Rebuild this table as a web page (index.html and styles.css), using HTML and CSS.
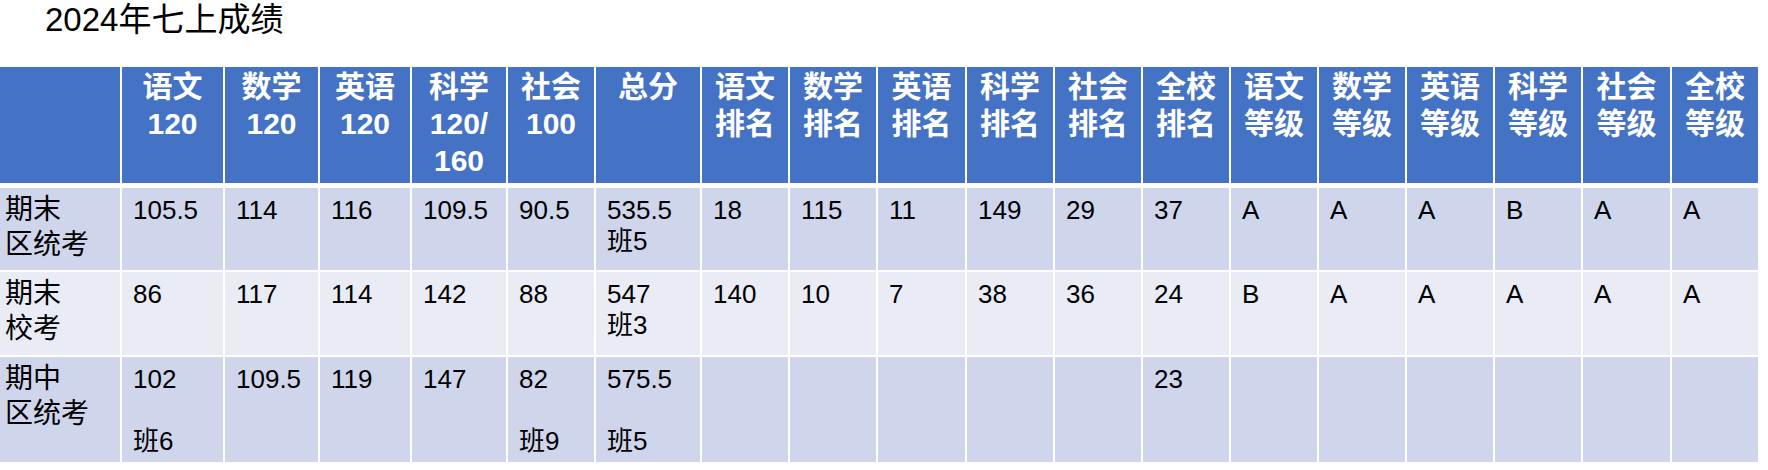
FILE: index.html
```html
<!DOCTYPE html>
<html lang="zh-CN">
<head>
<meta charset="utf-8">
<title>2024年七上成绩</title>
<link rel="stylesheet" href="styles.css">
</head>
<body>
<h1 class="title">2024年七上成绩</h1>
<div class="table">
  <div class="row head">
    <div class="cell"></div>
    <div class="cell">语文<br>120</div>
    <div class="cell">数学<br>120</div>
    <div class="cell">英语<br>120</div>
    <div class="cell">科学<br>120/<br>160</div>
    <div class="cell">社会<br>100</div>
    <div class="cell">总分</div>
    <div class="cell">语文<br>排名</div>
    <div class="cell">数学<br>排名</div>
    <div class="cell">英语<br>排名</div>
    <div class="cell">科学<br>排名</div>
    <div class="cell">社会<br>排名</div>
    <div class="cell">全校<br>排名</div>
    <div class="cell">语文<br>等级</div>
    <div class="cell">数学<br>等级</div>
    <div class="cell">英语<br>等级</div>
    <div class="cell">科学<br>等级</div>
    <div class="cell">社会<br>等级</div>
    <div class="cell">全校<br>等级</div>
  </div>
  <div class="row body odd r1">
    <div class="cell label">期末<br>区统考</div>
    <div class="cell">105.5</div>
    <div class="cell">114</div>
    <div class="cell">116</div>
    <div class="cell">109.5</div>
    <div class="cell">90.5</div>
    <div class="cell">535.5<br>班5</div>
    <div class="cell">18</div>
    <div class="cell">115</div>
    <div class="cell">11</div>
    <div class="cell">149</div>
    <div class="cell">29</div>
    <div class="cell">37</div>
    <div class="cell">A</div>
    <div class="cell">A</div>
    <div class="cell">A</div>
    <div class="cell">B</div>
    <div class="cell">A</div>
    <div class="cell">A</div>
  </div>
  <div class="row body even r2">
    <div class="cell label">期末<br>校考</div>
    <div class="cell">86</div>
    <div class="cell">117</div>
    <div class="cell">114</div>
    <div class="cell">142</div>
    <div class="cell">88</div>
    <div class="cell">547<br>班3</div>
    <div class="cell">140</div>
    <div class="cell">10</div>
    <div class="cell">7</div>
    <div class="cell">38</div>
    <div class="cell">36</div>
    <div class="cell">24</div>
    <div class="cell">B</div>
    <div class="cell">A</div>
    <div class="cell">A</div>
    <div class="cell">A</div>
    <div class="cell">A</div>
    <div class="cell">A</div>
  </div>
  <div class="row body odd r3">
    <div class="cell label">期中<br>区统考</div>
    <div class="cell">102<br><br>班6</div>
    <div class="cell">109.5</div>
    <div class="cell">119</div>
    <div class="cell">147</div>
    <div class="cell">82<br><br>班9</div>
    <div class="cell">575.5<br><br>班5</div>
    <div class="cell"></div>
    <div class="cell"></div>
    <div class="cell"></div>
    <div class="cell"></div>
    <div class="cell"></div>
    <div class="cell">23</div>
    <div class="cell"></div>
    <div class="cell"></div>
    <div class="cell"></div>
    <div class="cell"></div>
    <div class="cell"></div>
    <div class="cell"></div>
  </div>
</div>
</body>
</html>
```

FILE: styles.css
```css
html, body {
  margin: 0;
  padding: 0;
  background: #ffffff;
}

body {
  font-family: "Liberation Sans", "Noto Sans CJK SC", sans-serif;
  color: #000000;
  width: 1768px;
  height: 470px;
  overflow: hidden;
}

.title {
  margin: 0;
  padding-left: 45px;
  font-size: 33px;
  font-weight: normal;
  line-height: 40px;
  height: 40px;
}

.table {
  margin-top: 27px;
  display: flex;
  flex-direction: column;
  gap: 2px;
}

.row {
  display: grid;
  grid-template-columns: 120px 101px 93px 90px 94px 86px 104px 86px 86px 87px 86px 86px 86px 86px 86px 86px 86px 87px 86px;
  column-gap: 2px;
}

.head {
  height: 116px;
  margin-bottom: 3px;
}

.head .cell {
  background: #4472c4;
  color: #ffffff;
  font-weight: bold;
  font-size: 30px;
  line-height: 37px;
  text-align: center;
  padding-top: 1px;
}

.r1 { height: 82px; }
.r2 { height: 83px; }
.r3 { height: 105px; }

.odd .cell { background: #cfd5ea; }
.even .cell { background: #e9ebf5; }

.body .cell {
  font-size: 26px;
  line-height: 31px;
  padding: 7px 0 0 11px;
}

.body .cell.label {
  font-size: 28px;
  line-height: 35px;
  padding: 4px 0 0 5px;
}
```
